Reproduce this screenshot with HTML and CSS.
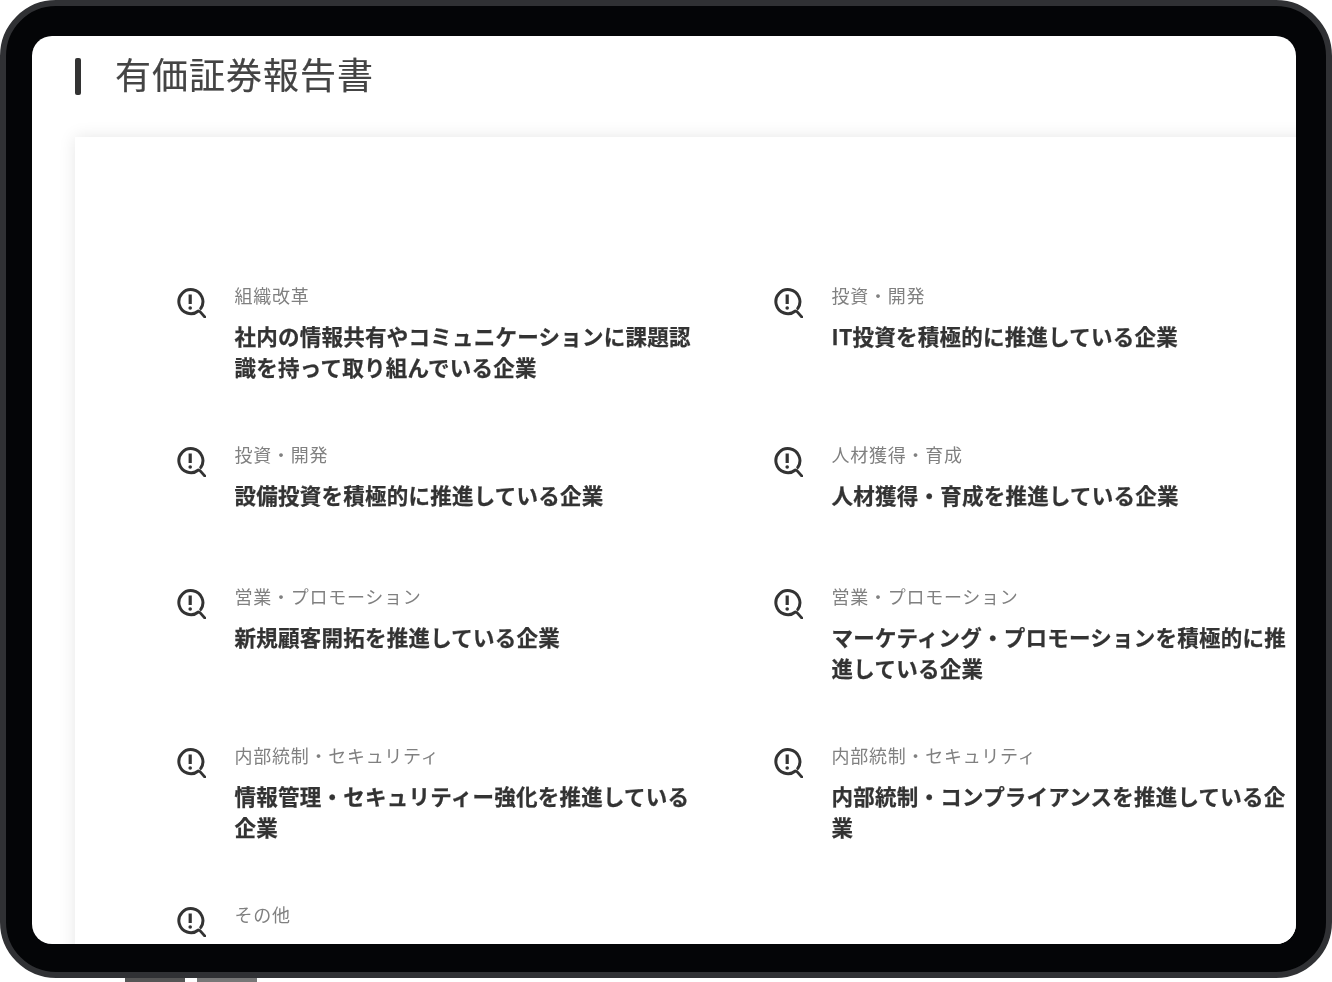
FILE: index.html
```html
<!DOCTYPE html>
<html lang="ja">
<head>
<meta charset="utf-8">
<title>有価証券報告書</title>
<link rel="stylesheet" href="styles.css">
</head>
<body>
<svg class="defs" width="0" height="0" aria-hidden="true">
  <symbol id="alert" viewBox="0 0 30 30">
    <path d="M22.4 23A12 12 0 1 1 24.8 20.4" fill="none" stroke="#333" stroke-width="3" stroke-linecap="round"/>
    <path d="M14.2 6.5v9.5" stroke="#333" stroke-width="3.2" fill="none"/>
    <circle cx="14.2" cy="20" r="1.8" fill="#333"/>
    <path d="M24 23.6l5 5.6" stroke="#333" stroke-width="2.8" stroke-linecap="round" fill="none"/>
  </symbol>
</svg>
<div class="device">
  <main class="screen">
    <h1 class="heading">有価証券報告書</h1>
    <section class="card">
      <div class="grid">
        <article class="item">
          <svg class="icon"><use href="#alert"/></svg>
          <div class="body"><p class="label">組織改革</p><h2 class="title">社内の情報共有やコミュニケーションに課題認識を持って取り組んでいる企業</h2></div>
        </article>
        <article class="item">
          <svg class="icon"><use href="#alert"/></svg>
          <div class="body"><p class="label">投資・開発</p><h2 class="title">IT投資を積極的に推進している企業</h2></div>
        </article>
        <article class="item">
          <svg class="icon"><use href="#alert"/></svg>
          <div class="body"><p class="label">投資・開発</p><h2 class="title">設備投資を積極的に推進している企業</h2></div>
        </article>
        <article class="item">
          <svg class="icon"><use href="#alert"/></svg>
          <div class="body"><p class="label">人材獲得・育成</p><h2 class="title">人材獲得・育成を推進している企業</h2></div>
        </article>
        <article class="item">
          <svg class="icon"><use href="#alert"/></svg>
          <div class="body"><p class="label">営業・プロモーション</p><h2 class="title">新規顧客開拓を推進している企業</h2></div>
        </article>
        <article class="item">
          <svg class="icon"><use href="#alert"/></svg>
          <div class="body"><p class="label">営業・プロモーション</p><h2 class="title">マーケティング・プロモーションを積極的に推進している企業</h2></div>
        </article>
        <article class="item">
          <svg class="icon"><use href="#alert"/></svg>
          <div class="body"><p class="label">内部統制・セキュリティ</p><h2 class="title">情報管理・セキュリティー強化を推進している企業</h2></div>
        </article>
        <article class="item">
          <svg class="icon"><use href="#alert"/></svg>
          <div class="body"><p class="label">内部統制・セキュリティ</p><h2 class="title">内部統制・コンプライアンスを推進している企業</h2></div>
        </article>
        <article class="item">
          <svg class="icon"><use href="#alert"/></svg>
          <div class="body"><p class="label">その他</p></div>
        </article>
      </div>
    </section>
  </main>
</div>
<div class="buttons"><span class="button"></span><span class="button button-light"></span></div>
</body>
</html>
```
FILE: styles.css
```css
* { box-sizing: border-box; }
html, body { margin: 0; padding: 0; background: #fff; }
body {
  width: 1332px;
  height: 982px;
  overflow: hidden;
  font-family: "Noto Sans CJK JP", "Noto Sans", sans-serif;
}
.defs { display: block; height: 0; }
.device {
  width: 1332px;
  height: 978px;
  padding: 30px 30px 28px 26px;
  border: 6px solid #303134;
  border-radius: 56px;
  background: #040507;
}
.screen {
  height: 908px;
  overflow: hidden;
  border-radius: 20px;
  background: #fff;
  padding: 0 0 0 43px;
}
.heading {
  display: flex;
  align-items: center;
  gap: 34px;
  height: 78px;
  margin: 0 0 23px;
  padding-bottom: 4px;
  font-size: 36px;
  font-weight: 400;
  line-height: 74px;
  letter-spacing: 1px;
  color: #444;
  -webkit-text-stroke: .2px #444;
  filter: blur(.5px);
}
.heading::before {
  content: "";
  width: 6px;
  height: 37px;
  margin-top: 6px;
  border-radius: 2px;
  background: #333;
}
.card {
  margin-right: -40px;
  min-height: 900px;
  padding: 145px 0 0 101px;
  background: #fff;
  box-shadow: 0 0 16px rgba(0, 0, 0, .1);
}
.grid {
  display: grid;
  grid-template-columns: 597px 597px;
  row-gap: 59px;
  align-items: start;
  filter: blur(.5px);
}
.item {
  display: flex;
  min-height: 83px;
  gap: 28.6px;
}
.icon {
  flex: none;
  width: 30px;
  height: 30px;
  margin-top: 6px;
}
.body { width: 464px; }
.label {
  margin: 0 0 12px;
  font-size: 18px;
  line-height: 26px;
  letter-spacing: .72px;
  color: #808080;
}
.title {
  margin: 0;
  font-size: 21.5px;
  font-weight: 700;
  line-height: 31px;
  letter-spacing: .24px;
  color: #333;
  -webkit-text-stroke: .25px #333;
}
.buttons {
  display: flex;
  gap: 12px;
  padding-left: 125px;
}
.button {
  width: 60px;
  height: 4px;
  background: #555;
}
.button-light { background: #777; }
```
